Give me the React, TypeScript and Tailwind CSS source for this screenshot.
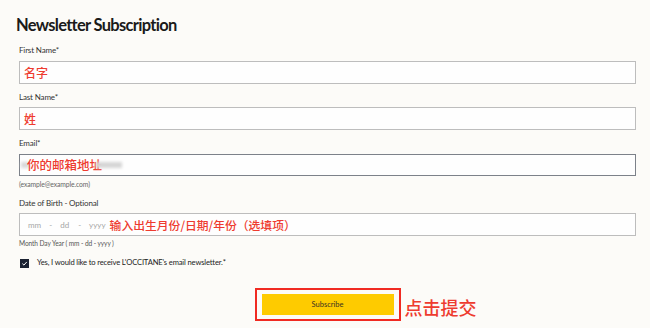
import React from "react";

const latin = "font-['Lato','Liberation_Sans',sans-serif]";
const cjk = "font-['Noto_Sans_CJK_SC','Noto_Sans',sans-serif] font-medium";

function Label({ children, className = "" }: { children: React.ReactNode; className?: string }) {
  return (
    <div className={`h-[12px] text-[8px] tracking-[-0.15px] leading-[12px] text-[#333] ${className}`}>{children}</div>
  );
}

export default function App() {
  return (
    <div className={`w-[650px] h-[328px] bg-[#fcfbf8] overflow-hidden ${latin}`}>
      <div className="pl-[19px] pr-[14px]">
        <h1 className="-ml-[3px] pt-[13px] h-[37px] text-[16.5px] leading-[24px] font-bold text-[#1a1a1a] tracking-[-0.7px]">
          Newsletter Subscription
        </h1>

        <Label className="mt-[7px]">First Name*</Label>
        <div className="mt-[5px] h-[23px] border border-[#bdbdbd] bg-[#fefefe] flex items-center pl-[4px]">
          <span className={`text-[12px] text-[#ee3b2f] ${cjk}`}>名字</span>
        </div>

        <Label className="mt-[7px]">Last Name*</Label>
        <div className="mt-[4px] h-[23px] border border-[#bdbdbd] bg-[#fefefe] flex items-center pl-[4px]">
          <span className={`text-[12px] text-[#ee3b2f] ${cjk}`}>姓</span>
        </div>

        <Label className="mt-[7px]">Email*</Label>
        <div className="mt-[5px] h-[22px] border border-[#7c8189] bg-[#fefefe] flex items-center pl-[2px] relative">
          <span className="absolute left-[1px] top-[7px] w-[8px] h-[6px] bg-[#d9d9d9] blur-[1.5px]" />
          <span className={`relative ml-[5px] text-[12.5px] text-[#ee3b2f] ${cjk}`}>你的邮箱地址</span>
          <span className="ml-[-6px] w-[26px] h-[6px] bg-[#d6d6d6] blur-[1.5px]" />
        </div>
        <div className="mt-[2px] h-[12px] text-[6.8px] tracking-[-0.1px] leading-[12px] text-[#666]">(example@example.com)</div>

        <Label className="mt-[7px]">Date of Birth - Optional</Label>
        <div className="mt-[4px] h-[23px] border border-[#bdbdbd] bg-[#fefefe] flex items-center pl-[8px] text-[8px] text-[#a6a6a6]">
          <span>mm</span>
          <span className="ml-[8px]">-</span>
          <span className="ml-[8px]">dd</span>
          <span className="ml-[9px]">-</span>
          <span className="ml-[8px]">yyyy</span>
          <span className={`ml-[4px] text-[11.8px] text-[#ee3b2f] ${cjk}`}>输入出生月份/日期/年份（选填项）</span>
        </div>
        <div className="mt-[1px] h-[12px] text-[6.6px] tracking-[-0.1px] leading-[12px] text-[#555]">Month Day Year ( mm - dd - yyyy )</div>

        <div className="mt-[8px] h-[12px] flex items-center">
          <span className="ml-[1px] w-[9px] h-[9px] bg-[#1c2333] flex items-center justify-center">
            <svg width="7" height="7" viewBox="0 0 10 10">
              <path d="M2 5.2 L4.2 7.3 L8.2 2.8" fill="none" stroke="#fff" strokeWidth="1.4" />
            </svg>
          </span>
          <span className="ml-[8px] text-[7.6px] tracking-[-0.15px] text-[#222]">Yes, I would like to receive L'OCCITANE's email newsletter.*</span>
        </div>

        <div className="mt-[19px] flex justify-center">
          <div className="relative border-2 border-[#f02a22] w-[146px] h-[33px] px-[5px] py-[4px]">
            <div className="h-full bg-[#fecb00] flex items-center justify-center text-[7.5px] text-[#3a3320]">
              Subscribe
            </div>
            <span className={`absolute left-full top-[5px] ml-[6px] whitespace-nowrap text-[18px] leading-[24px] text-[#ee3b2f] ${cjk}`}>
              点击提交
            </span>
          </div>
        </div>
      </div>
    </div>
  );
}
